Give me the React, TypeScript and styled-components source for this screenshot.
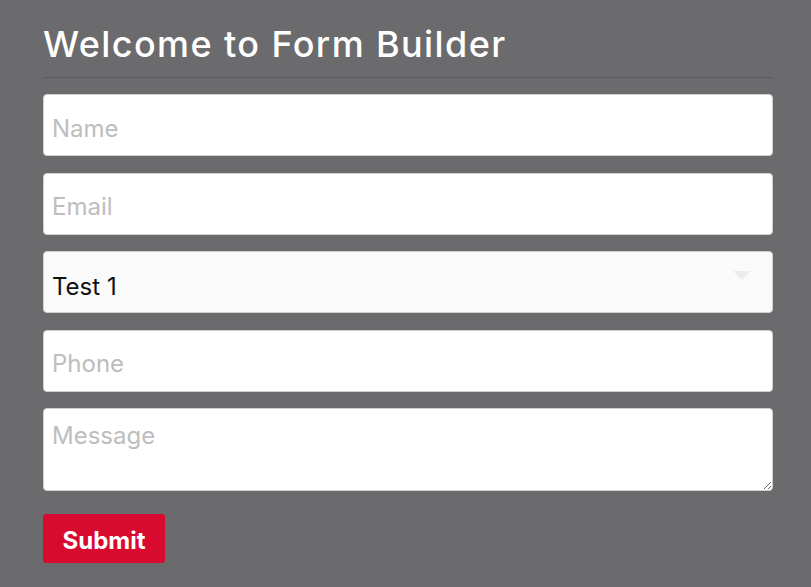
import React from 'react';
import styled, { createGlobalStyle } from 'styled-components';

const GlobalStyle = createGlobalStyle`
  html, body {
    margin: 0;
    padding: 0;
    background: #6b6b6d;
    font-family: Inter, "Open Sans", sans-serif;
  }
`;

const Page = styled.div`
  width: 811px;
  height: 587px;
  background: #6b6b6d;
  box-sizing: border-box;
  padding: 23px 38px 0 43px;
  overflow: hidden;
`;

const Title = styled.h1`
  margin: 0;
  padding-bottom: 12px;
  border-bottom: 1px solid #5e5e60;
  color: #ffffff;
  font-family: Inter, sans-serif;
  font-size: 36px;
  font-weight: 500;
  line-height: 42px;
  letter-spacing: 1.4px;
`;

const Form = styled.form`
  display: flex;
  flex-direction: column;
  gap: 16.5px;
  margin-top: 16px;
`;

const fieldBase = `
  box-sizing: border-box;
  width: 730px;
  border: 1px solid #d0d0d0;
  border-radius: 4px;
  padding: 6px 8px 0;
  font-family: Inter, sans-serif;
  font-size: 24px;
  color: #111;
  outline: none;
  &::placeholder {
    color: #bdbdbd;
  }
`;

const Input = styled.input`
  ${fieldBase}
  height: 62px;
  background: #ffffff;
`;

const SelectWrap = styled.div`
  position: relative;
  width: 730px;
`;

const Select = styled.select`
  ${fieldBase}
  height: 62px;
  padding-top: 8px;
  background: #fafafa;
  appearance: none;
  -webkit-appearance: none;
`;

const Arrow = styled.span`
  position: absolute;
  right: 22px;
  top: 20px;
  width: 0;
  height: 0;
  border-left: 9px solid transparent;
  border-right: 9px solid transparent;
  border-top: 9px solid #ececec;
  pointer-events: none;
`;

const TextArea = styled.textarea`
  ${fieldBase}
  height: 83px;
  padding-top: 12px;
  background: #ffffff;
  resize: vertical;
  display: block;
`;

const SubmitButton = styled.button`
  align-self: flex-start;
  width: 122px;
  height: 49px;
  margin-top: 6px;
  padding-top: 5px;
  border: none;
  border-radius: 3px;
  background: #d80a2f;
  color: #ffffff;
  font-family: Inter, sans-serif;
  font-size: 24px;
  font-weight: 700;
  cursor: pointer;
`;

export default function App() {
  return (
    <>
      <GlobalStyle />
      <Page>
        <Title>Welcome to Form Builder</Title>
        <Form onSubmit={(e) => e.preventDefault()}>
          <Input type="text" placeholder="Name" />
          <Input type="email" placeholder="Email" />
          <SelectWrap>
            <Select defaultValue="test1">
              <option value="test1">Test 1</option>
              <option value="test2">Test 2</option>
            </Select>
            <Arrow />
          </SelectWrap>
          <Input type="tel" placeholder="Phone" />
          <TextArea placeholder="Message" />
          <SubmitButton type="submit">Submit</SubmitButton>
        </Form>
      </Page>
    </>
  );
}
